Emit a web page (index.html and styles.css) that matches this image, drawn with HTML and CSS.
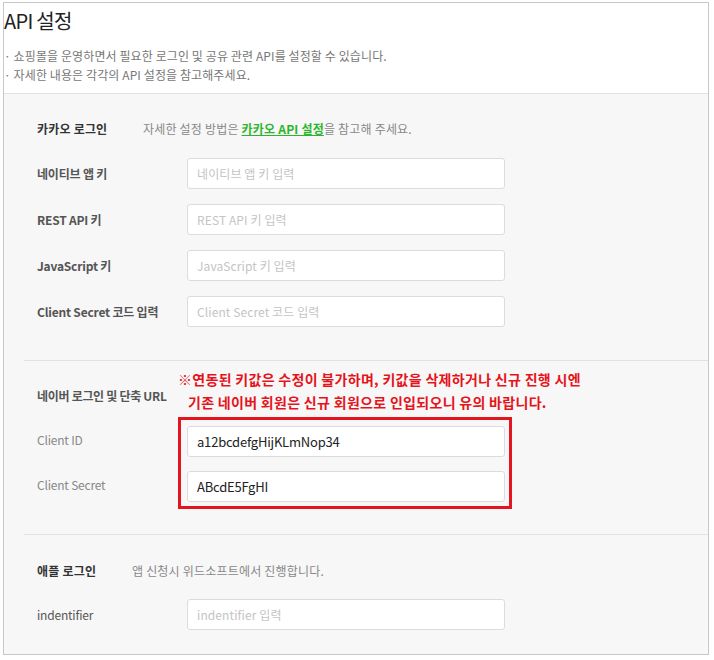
FILE: index.html
```html
<!DOCTYPE html>
<html>
<head>
    <title>API 설정</title>
    <link rel="stylesheet" href="styles.css">
</head>
<body>

<div class="panel">
    <div class="panel-head">
        <h2>API 설정</h2>
        <p class="desc">· 쇼핑몰을 운영하면서 필요한 로그인 및 공유 관련 API를 설정할 수 있습니다.</p>
        <p class="desc">· 자세한 내용은 각각의 API 설정을 참고해주세요.</p>
    </div>

    <div class="panel-body">
        <div class="section kakao">
            <div class="section-head">
                <span class="section-title">카카오 로그인</span>
                <span class="section-note">자세한 설정 방법은 <a href="#" class="link">카카오 API 설정</a>을 참고해 주세요.</span>
            </div>
            <div class="row">
                <label class="label">네이티브 앱 키</label>
                <input type="text" class="field" placeholder="네이티브 앱 키 입력">
            </div>
            <div class="row">
                <label class="label">REST API 키</label>
                <input type="text" class="field" placeholder="REST API 키 입력">
            </div>
            <div class="row">
                <label class="label">JavaScript 키</label>
                <input type="text" class="field" placeholder="JavaScript 키 입력">
            </div>
            <div class="row">
                <label class="label">Client Secret 코드 입력</label>
                <input type="text" class="field" placeholder="Client Secret 코드 입력">
            </div>
        </div>

        <div class="section naver">
            <div class="naver-head">
                <span class="naver-title">네이버 로그인 및 단축 URL</span>
                <div class="warning">
                    <p>※연동된 키값은 수정이 불가하며, 키값을 삭제하거나 신규 진행 시엔</p>
                    <p class="indent">기존 네이버 회원은 신규 회원으로 인입되오니 유의 바랍니다.</p>
                </div>
            </div>
            <div class="naver-body">
                <div class="naver-labels">
                    <label class="label light">Client ID</label>
                    <label class="label light">Client Secret</label>
                </div>
                <div class="highlight">
                    <input type="text" class="field" value="a12bcdefgHijKLmNop34">
                    <input type="text" class="field" value="ABcdE5FgHI">
                </div>
            </div>
        </div>

        <div class="section apple">
            <div class="section-head">
                <span class="section-title">애플 로그인</span>
                <span class="section-note">앱 신청시 위드소프트에서 진행합니다.</span>
            </div>
            <div class="row">
                <label class="label normal">indentifier</label>
                <input type="text" class="field" placeholder="indentifier 입력">
            </div>
        </div>
    </div>
</div>

</body>
</html>
```

FILE: styles.css
```css
body {
    margin: 0;
    padding: 2px 0 0 3px;
    font-family: "Noto Sans CJK KR", "Noto Sans", sans-serif;
    font-size: 12px;
    color: #555;
    background: #fff;
}

p {
    margin: 0;
}

.panel {
    width: 704px;
    border: 1px solid #c8c8c8;
}

.panel-head {
    background: #fff;
    height: 90px;
}

.panel-head h2 {
    margin: 0 0 12px;
    padding: 5px 0 0 0;
    font-size: 20px;
    font-weight: normal;
    line-height: 26px;
    color: #222;
    letter-spacing: -0.7px;
}

.desc {
    font-size: 12px;
    line-height: 19px;
    color: #777;
    letter-spacing: 0.1px;
}

.panel-body {
    background: #f7f7f7;
    border-top: 1px solid #e2e2e2;
    padding-left: 20px;
}

.section {
    padding-left: 13px;
    border-top: 1px solid #e2e2e2;
}

.kakao {
    border-top: none;
    padding-top: 25px;
    padding-bottom: 33px;
}

.section-head {
    display: flex;
    align-items: center;
    height: 18px;
    margin-bottom: 21px;
}

.section-title {
    font-weight: bold;
    color: #333;
    letter-spacing: 0.2px;
}

.kakao .section-title {
    width: 106px;
}

.apple .section-title {
    width: 95px;
}

.section-note {
    color: #888;
    letter-spacing: 0.2px;
}

.link {
    color: #2cb52c;
    font-weight: bold;
    text-decoration: underline;
}

.row {
    display: flex;
    align-items: center;
    margin-bottom: 15px;
}

.row:last-child {
    margin-bottom: 0;
}

.label {
    width: 150px;
    flex: none;
    font-weight: bold;
    color: #555;
    letter-spacing: -0.2px;
}

.label.light {
    font-weight: normal;
    color: #888;
}

.label.normal {
    font-weight: normal;
    color: #555;
}

.field {
    box-sizing: border-box;
    width: 318px;
    height: 31px;
    padding: 0 9px;
    border: 1px solid #dcdcdc;
    border-radius: 3px;
    background: #fff;
    font-family: "Noto Sans CJK KR", "Noto Sans", sans-serif;
    font-size: 13px;
    color: #222;
    outline: none;
    letter-spacing: -0.2px;
}

.field::placeholder {
    color: #c4c4c4;
    font-size: 12px;
    letter-spacing: 0.1px;
}

.naver {
    padding-top: 7px;
    padding-bottom: 25px;
}

.naver-head {
    display: flex;
    margin-bottom: 3px;
}

.naver-title {
    width: 141px;
    flex: none;
    margin-top: 19px;
    line-height: 18px;
    font-weight: bold;
    color: #555;
    letter-spacing: -0.3px;
}

.warning {
    color: #e5141c;
    font-weight: bold;
    font-size: 14px;
    line-height: 23px;
    letter-spacing: 0.3px;
}

.warning .indent {
    padding-left: 10px;
}

.naver-body {
    display: flex;
}

.naver-labels {
    width: 141px;
    flex: none;
    display: flex;
    flex-direction: column;
    gap: 14px;
    padding-top: 7px;
}

.naver-labels .label {
    height: 31px;
    line-height: 31px;
}

.highlight {
    display: flex;
    flex-direction: column;
    gap: 14px;
    padding: 6px 4px 4px 6px;
    border: 3px solid #e3161f;
}

.apple {
    padding-top: 26px;
    padding-bottom: 24px;
}

.apple .section-head {
    margin-bottom: 20px;
}
```
